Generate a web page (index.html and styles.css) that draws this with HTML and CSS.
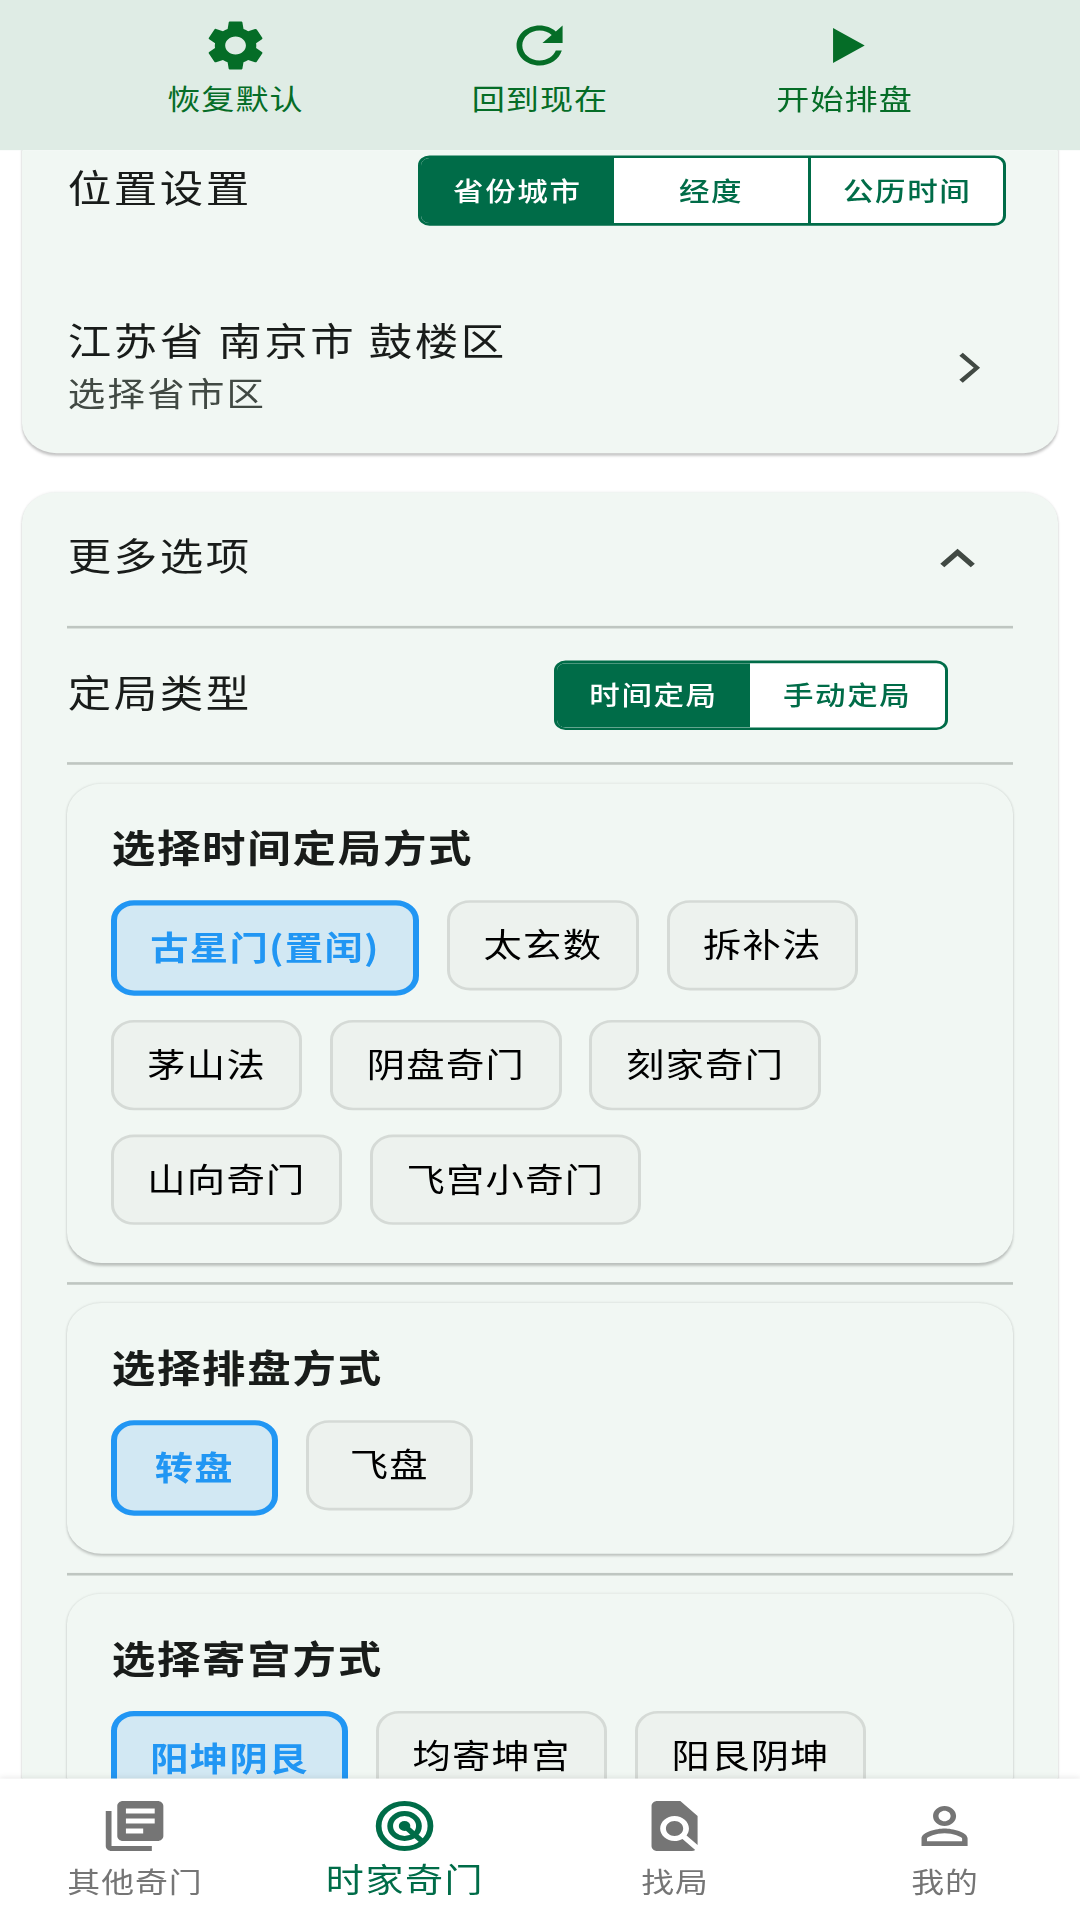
FILE: index.html
```html
<!DOCTYPE html>
<html lang="zh-CN">
<head>
<meta charset="UTF-8">
<meta name="viewport" content="width=device-width, initial-scale=1.0">
<title>时家奇门</title>
<link rel="stylesheet" href="styles.css">
</head>
<body>
<div class="app">
    <header class="toolbar">
        <button class="tool">
            <svg class="icon" viewBox="0 0 24 24"><path d="M19.14 12.94c.04-.3.06-.61.06-.94 0-.32-.02-.64-.07-.94l2.03-1.58c.18-.14.23-.41.12-.61l-1.92-3.32c-.12-.22-.37-.29-.59-.22l-2.39.96c-.5-.38-1.03-.7-1.62-.94L14.4 2.81c-.04-.24-.24-.41-.48-.41h-3.84c-.24 0-.43.17-.47.41l-.36 2.54c-.59.24-1.13.57-1.62.94l-2.39-.96c-.22-.08-.47 0-.59.22L2.74 8.87c-.12.21-.08.47.12.61l2.03 1.58c-.05.3-.09.63-.09.94s.02.64.07.94l-2.03 1.58c-.18.14-.23.41-.12.61l1.92 3.32c.12.22.37.29.59.22l2.39-.96c.5.38 1.03.7 1.62.94l.36 2.54c.05.24.24.41.48.41h3.84c.24 0 .44-.17.47-.41l.36-2.54c.59-.24 1.13-.56 1.62-.94l2.39.96c.22.08.47 0 .59-.22l1.92-3.32c.12-.22.07-.47-.12-.61l-2.01-1.58zM12 15.6c-1.98 0-3.6-1.62-3.6-3.6s1.62-3.6 3.6-3.6 3.6 1.62 3.6 3.6-1.62 3.6-3.6 3.6z"/></svg>
            <span>恢复默认</span>
        </button>
        <button class="tool">
            <svg class="icon" viewBox="0 0 24 24"><path d="M17.65 6.35C16.2 4.9 14.21 4 12 4c-4.42 0-7.99 3.58-7.99 8s3.57 8 7.99 8c3.73 0 6.84-2.55 7.73-6h-2.08c-.82 2.33-3.04 4-5.65 4-3.31 0-6-2.69-6-6s2.69-6 6-6c1.66 0 3.14.69 4.22 1.78L13 11h7V4l-2.35 2.35z"/></svg>
            <span>回到现在</span>
        </button>
        <button class="tool">
            <svg class="icon" viewBox="0 0 24 24"><path d="M8 5v14l11-7z"/></svg>
            <span>开始排盘</span>
        </button>
    </header>

    <main class="content">
        <section class="card location">
            <div class="row location-row">
                <h2>位置设置</h2>
                <div class="segments">
                    <button class="segment active">省份城市</button>
                    <button class="segment">经度</button>
                    <button class="segment">公历时间</button>
                </div>
            </div>
            <div class="row region-row">
                <div class="region">
                    <p class="region-name">江苏省 南京市 鼓楼区</p>
                    <p class="region-hint">选择省市区</p>
                </div>
                <svg class="icon arrow" viewBox="0 0 24 24"><path d="M10 6L8.8 7.2 13.8 12l-5 4.8L10 18l6-6z"/></svg>
            </div>
        </section>

        <section class="card options">
            <div class="row more-row">
                <h2>更多选项</h2>
                <svg class="icon arrow" viewBox="0 0 24 24"><path d="M12 8l-6 6 1.41 1.41L12 10.83l4.59 4.58L18 14z"/></svg>
            </div>
            <hr>
            <div class="row type-row">
                <h2>定局类型</h2>
                <div class="segments">
                    <button class="segment active">时间定局</button>
                    <button class="segment">手动定局</button>
                </div>
            </div>
            <hr>
            <div class="group">
                <h3>选择时间定局方式</h3>
                <div class="chips">
                    <button class="chip selected">古星门(置闰)</button>
                    <button class="chip">太玄数</button>
                    <button class="chip">拆补法</button>
                    <button class="chip">茅山法</button>
                    <button class="chip">阴盘奇门</button>
                    <button class="chip">刻家奇门</button>
                    <button class="chip">山向奇门</button>
                    <button class="chip">飞宫小奇门</button>
                </div>
            </div>
            <hr>
            <div class="group">
                <h3>选择排盘方式</h3>
                <div class="chips">
                    <button class="chip selected">转盘</button>
                    <button class="chip">飞盘</button>
                </div>
            </div>
            <hr>
            <div class="group">
                <h3>选择寄宫方式</h3>
                <div class="chips">
                    <button class="chip selected">阳坤阴艮</button>
                    <button class="chip">均寄坤宫</button>
                    <button class="chip">阳艮阴坤</button>
                </div>
            </div>
        </section>
    </main>

    <nav class="tabbar">
        <a class="tab">
            <svg class="icon" viewBox="0 0 24 24"><path d="M4 6H2v14c0 1.1.9 2 2 2h14v-2H4V6zm16-4H8c-1.1 0-2 .9-2 2v12c0 1.1.9 2 2 2h12c1.1 0 2-.9 2-2V4c0-1.1-.9-2-2-2zm-1 9H9V9h10v2zm-4 4H9v-2h6v2zm4-8H9V5h10v2z"/></svg>
            <span>其他奇门</span>
        </a>
        <a class="tab current">
            <svg class="icon" viewBox="0 0 24 24"><g fill="none" stroke="currentColor" stroke-width="2"><circle cx="12" cy="12" r="9"/><circle cx="12" cy="12" r="5"/><path d="M12 12l6.4 6.4"/></g><circle cx="12" cy="12" r="2"/></svg>
            <span>时家奇门</span>
        </a>
        <a class="tab">
            <svg class="icon" viewBox="0 0 24 24"><path d="M20 19.59V8l-6-6H6c-1.1 0-1.99.9-1.99 2L4 20c0 1.1.89 2 1.99 2H18c.45 0 .85-.15 1.19-.4l-4.43-4.43c-.8.52-1.74.83-2.76.83-2.76 0-5-2.24-5-5s2.24-5 5-5 5 2.24 5 5c0 1.02-.31 1.96-.83 2.75L20 19.59zM9 13c0 1.66 1.34 3 3 3s3-1.34 3-3-1.34-3-3-3-3 1.34-3 3z"/></svg>
            <span>找局</span>
        </a>
        <a class="tab">
            <svg class="icon" viewBox="0 0 24 24"><path d="M12 5.9c1.16 0 2.1.94 2.1 2.1s-.94 2.1-2.1 2.1S9.9 9.16 9.9 8s.94-2.1 2.1-2.1m0 9c2.97 0 6.1 1.46 6.1 2.1v1.1H5.9V17c0-.64 3.13-2.1 6.1-2.1M12 4C9.79 4 8 5.79 8 8s1.79 4 4 4 4-1.79 4-4-1.79-4-4-4zm0 9c-2.67 0-8 1.34-8 4v3h16v-3c0-2.66-5.33-4-8-4z"/></svg>
            <span>我的</span>
        </a>
    </nav>
</div>
</body>
</html>
```
FILE: styles.css
```css
* {
    box-sizing: border-box;
}
html {
    height: 1920px;
    overflow: hidden;
}
body {
    margin: 0;
    height: 1920px;
    overflow: hidden;
    background-color: #fff;
    font-family: "Noto Sans CJK SC", sans-serif;
    color: #191c1a;
}
/* 375 x 768 screen, stretched to fill the window */
.app {
    display: flex;
    flex-direction: column;
    width: 375px;
    height: 768px;
    overflow: hidden;
    zoom: 2.88;
    transform: scaleY(0.86806);
    transform-origin: 0 0;
}
button {
    font-family: inherit;
    margin: 0;
    padding: 0;
    border: none;
    background: none;
    white-space: nowrap;
}
h2, h3, p {
    margin: 0;
    font-weight: 400;
}
.icon {
    display: block;
    width: 24px;
    height: 24px;
    fill: currentColor;
}

/* top bar */
.toolbar {
    display: flex;
    justify-content: space-evenly;
    flex: none;
    height: 60.2px;
    padding-top: 6.2px;
    background-color: #dfece5;
}
.tool {
    display: flex;
    flex-direction: column;
    align-items: center;
    width: 48px;
    color: #056d27;
    font-size: 11.5px;
    letter-spacing: 0.35px;
    line-height: 18.2px;
}

.content {
    flex: 1;
    min-height: 0;
    overflow: hidden;
    padding: 0 7.5px;
}
.card {
    background-color: #f1f7f3;
    border-radius: 12px;
    box-shadow: 0 0.8px 1px rgba(0, 0, 0, 0.2), 0 0 1px rgba(0, 0, 0, 0.08);
}
.row {
    display: flex;
    align-items: center;
    justify-content: space-between;
}
.row h2, .region-name {
    font-size: 15.1px;
    letter-spacing: 0.9px;
    line-height: 22px;
}
.row h2 {
    padding-left: 0.3px;
    padding-bottom: 3.5px;
}
.location {
    height: 141.1px;
    margin-top: -20px;
    padding: 20px 15.7px 0;
}
.location-row {
    height: 32.2px;
    padding-right: 2.5px;
}
.region-row {
    height: 56px;
    margin-top: 26.8px;
    padding-right: 3.6px;
}
.region {
    padding: 0 0 2.6px 0.3px;
}
.region-hint {
    padding-top: 0.7px;
    font-size: 13px;
    letter-spacing: 0.8px;
    line-height: 20px;
    color: #414943;
}
.arrow {
    color: #414943;
}
.segments {
    display: flex;
    height: 28px;
    border: 1.05px solid #006c48;
    border-radius: 4px;
    overflow: hidden;
    background-color: #fff;
}
.segment {
    width: 67.6px;
    padding-bottom: 1px;
    font-size: 10.6px;
    font-weight: 500;
    letter-spacing: 0.55px;
    color: #006c48;
}
.segment + .segment {
    border-left: 1.05px solid #006c48;
}
.segment.active {
    width: 66.9px;
    background-color: #006c48;
    color: #fff;
}
.segment.active + .segment {
    border-left: none;
}

.options {
    margin-top: 15.6px;
    padding: 0 15.7px;
    height: 620px;
}
.more-row {
    height: 53.4px;
    padding-right: 7.2px;
}
hr {
    height: 1.05px;
    margin: 0;
    border: none;
    background-color: #bfc6c1;
}
.type-row {
    height: 53.5px;
    padding-right: 22.8px;
}

/* option groups */
.group {
    margin: 7.5px 0;
    padding: 15px 15.3px 15.3px;
    border-radius: 12px;
    background-color: #f1f7f3;
    box-shadow: 0 0.8px 1px rgba(0, 0, 0, 0.2), 0 0 1px rgba(0, 0, 0, 0.05);
}
.group h3 {
    height: 31.8px;
    padding-left: 0.3px;
    font-size: 15.1px;
    font-weight: 700;
    letter-spacing: 0.6px;
    line-height: 20px;
}
.chips {
    display: flex;
    flex-wrap: wrap;
    align-items: flex-start;
    gap: 9.7px;
}
.chip {
    min-width: 58px;
    height: 36.1px;
    padding: 0 11.6px 2px;
    border: 1.05px solid #d5dad6;
    border-radius: 8px;
    background-color: #edf2ee;
    font-size: 13.3px;
    letter-spacing: 0.45px;
    color: #000;
}
.chip.selected {
    height: 38.2px;
    border: 2.1px solid #2196f3;
    background-color: #d2e8f3;
    font-weight: 700;
    color: #2196f3;
}

/* bottom navigation */
.tabbar {
    display: flex;
    flex: none;
    height: 56.4px;
    background-color: #fff;
    box-shadow: 0 -0.5px 2px rgba(0, 0, 0, 0.08);
    position: relative;
}
.tab {
    display: flex;
    flex: 1;
    flex-direction: column;
    align-items: center;
    padding-top: 6.7px;
    font-size: 11.4px;
    letter-spacing: 0.35px;
    line-height: 19.8px;
    color: #757575;
}
.tab.current {
    font-size: 13.2px;
    letter-spacing: 0.55px;
    line-height: 17.2px;
    color: #006c48;
}
```
